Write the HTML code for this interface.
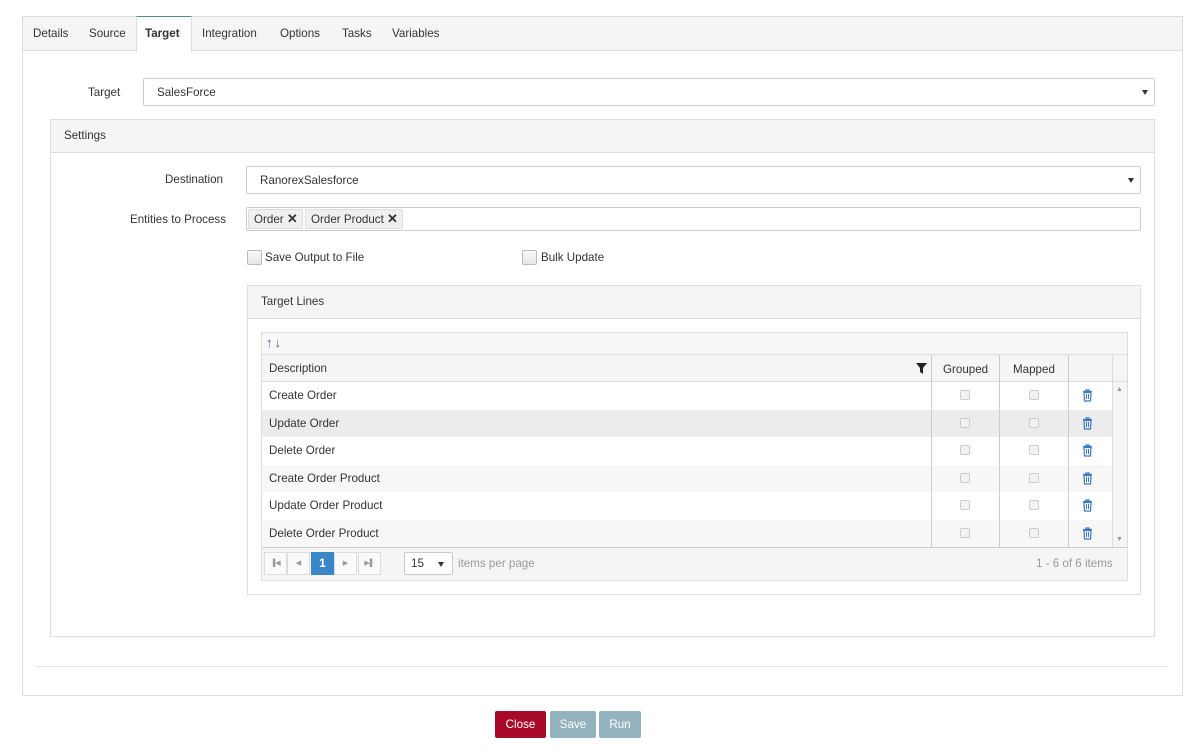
<!DOCTYPE html>
<html><head><meta charset="utf-8"><style>
*{box-sizing:border-box;margin:0;padding:0}
body{width:1200px;height:754px;background:#fff;font-family:"Liberation Sans",sans-serif;font-size:11.6px;color:#333;position:relative;overflow:hidden}
.a{position:absolute}
.box{position:absolute;border:1px solid #ddd}
.t{position:absolute;white-space:nowrap;line-height:14px}
.sel{position:absolute;border:1px solid #ccc;background:#fff;border-radius:2px}
.caret{position:absolute;right:6px;top:50%;margin-top:-2px;border-left:3px solid transparent;border-right:3px solid transparent;border-top:5px solid #333}
.cb{position:absolute;width:15px;height:15px;border:1px solid #bbb;border-radius:2px;background:linear-gradient(#fafafa,#e6e6e6)}
.scb{position:absolute;width:10px;height:10px;border:1px solid #ccc;border-radius:2px;background:#f2f2f2}
.row{position:absolute;left:262px;width:850px;height:27.5px}
.tag{position:absolute;top:209px;height:20px;border:1px solid #ddd;background:#f0f0f0;border-radius:2px;line-height:18px;padding-left:5px}
.btn{position:absolute;top:711px;height:27px;color:#fff;text-align:center;line-height:27px;border-radius:2px}
.pg{position:absolute;top:552px;height:23px;width:23px;border:1px solid #ddd;background:#fafafa;font-size:7px;color:#999;text-align:center;line-height:21px}
</style></head><body>
<div class="box" style="left:22px;top:16px;width:1161px;height:680px"></div>
<div class="a" style="left:23px;top:17px;width:1159px;height:34px;background:#f5f5f5;border-bottom:1px solid #ddd"></div>
<div class="a" style="left:136px;top:16px;width:56px;height:36px;background:#fff;border:1px solid #ddd;border-top:1px solid #4a8a9a;border-bottom:none"></div>
<div class="t" style="left:33px;top:27px">Details</div>
<div class="t" style="left:89px;top:27px">Source</div>
<div class="t" style="left:145px;top:27px;font-weight:bold">Target</div>
<div class="t" style="left:202px;top:27px">Integration</div>
<div class="t" style="left:280px;top:27px">Options</div>
<div class="t" style="left:342px;top:27px">Tasks</div>
<div class="t" style="left:392px;top:27px">Variables</div>

<div class="t" style="left:88px;top:86px">Target</div>
<div class="sel" style="left:143px;top:78px;width:1012px;height:28px"><div class="t" style="left:13px;top:7px">SalesForce</div><div class="caret"></div></div>

<div class="box" style="left:50px;top:119px;width:1105px;height:518px"></div>
<div class="a" style="left:51px;top:120px;width:1103px;height:33px;background:#f5f5f5;border-bottom:1px solid #ddd"></div>
<div class="t" style="left:64px;top:129px">Settings</div>

<div class="t" style="left:165px;top:173px">Destination</div>
<div class="sel" style="left:246px;top:166px;width:895px;height:28px"><div class="t" style="left:13px;top:7px">RanorexSalesforce</div><div class="caret"></div></div>

<div class="t" style="left:130px;top:213px">Entities to Process</div>
<div class="sel" style="left:246px;top:207px;width:895px;height:24px"></div>
<div class="tag" style="left:248px;width:55px">Order <b style="font-size:13px">✕</b></div>
<div class="tag" style="left:305px;width:98px">Order Product <b style="font-size:13px">✕</b></div>

<div class="cb" style="left:247px;top:250px"></div><div class="t" style="left:265px;top:251px">Save Output to File</div>
<div class="cb" style="left:522px;top:250px"></div><div class="t" style="left:541px;top:251px">Bulk Update</div>

<div class="box" style="left:247px;top:285px;width:894px;height:310px"></div>
<div class="a" style="left:248px;top:286px;width:892px;height:33px;background:#f5f5f5;border-bottom:1px solid #ddd"></div>
<div class="t" style="left:261px;top:295px">Target Lines</div>

<div class="box" style="left:261px;top:332px;width:867px;height:249px;background:#fff"></div>
<div class="a" style="left:262px;top:333px;width:865px;height:22px;background:#f7f7f7;border-bottom:1px solid #ddd"></div>
<div class="t" style="left:266px;top:336px;color:#2a6ebb;font-weight:bold;font-size:13px;letter-spacing:2px">↑↓</div>
<div class="a" style="left:262px;top:355px;width:865px;height:27px;background:#f5f5f5;border-bottom:1px solid #ddd"></div>
<div class="t" style="left:269px;top:362px">Description</div>
<svg class="a" style="left:916px;top:363px" width="11" height="11"><path d="M0 0H11L7 5V11L4 9V5Z" fill="#222"/></svg>
<div class="t" style="left:943px;top:363px">Grouped</div>
<div class="t" style="left:1013px;top:363px">Mapped</div>

<div class="row" style="top:382px;background:#fff"></div>
<div class="row" style="top:410px;background:#ececec"></div>
<div class="row" style="top:437px;background:#fff"></div>
<div class="row" style="top:465px;background:#f7f7f7"></div>
<div class="row" style="top:492px;background:#fff"></div>
<div class="row" style="top:520px;background:#f7f7f7"></div>
<div class="t" style="left:269px;top:389px">Create Order</div>
<div class="t" style="left:269px;top:417px">Update Order</div>
<div class="t" style="left:269px;top:444px">Delete Order</div>
<div class="t" style="left:269px;top:472px">Create Order Product</div>
<div class="t" style="left:269px;top:499px">Update Order Product</div>
<div class="t" style="left:269px;top:527px">Delete Order Product</div>

<div class="a" style="left:931px;top:355px;width:1px;height:192px;background:#ccc"></div>
<div class="a" style="left:999px;top:355px;width:1px;height:192px;background:#ccc"></div>
<div class="a" style="left:1068px;top:355px;width:1px;height:192px;background:#ccc"></div>
<div class="a" style="left:1112px;top:355px;width:1px;height:192px;background:#ddd"></div>
<div class="a" style="left:1113px;top:382px;width:14px;height:165px;background:#f5f5f5"></div>
<div class="t" style="left:1116px;top:383px;font-size:7px;color:#999">▲</div>
<div class="t" style="left:1116px;top:533px;font-size:7px;color:#999">▼</div>

<div id="cells"></div>
<script>
var ys=[390,418,445,473,500,528],h='';
ys.forEach(function(y){
h+='<div class="scb" style="left:960px;top:'+y+'px"></div><div class="scb" style="left:1029px;top:'+y+'px"></div>';
h+='<svg class="a" style="left:1082px;top:'+(y-1)+'px" width="11" height="13"><path d="M1 2.5H10M4 2.5V1H7V2.5M2 3.5H9L8.5 12H2.5Z" fill="none" stroke="#3b78c0" stroke-width="1.2"/><path d="M4.5 5V10M6.5 5V10" stroke="#3b78c0" stroke-width="1"/></svg>';
});
document.getElementById('cells').innerHTML=h;
</script>

<div class="a" style="left:262px;top:547px;width:865px;height:33px;background:#f5f5f5;border-top:1px solid #ccc"></div>
<div class="pg" style="left:264px">▐◀</div>
<div class="pg" style="left:287px">◀</div>
<div class="pg" style="left:311px;background:#3a87c8;border-color:#3a87c8;color:#fff;font-size:12px;font-weight:bold">1</div>
<div class="pg" style="left:334px">▶</div>
<div class="pg" style="left:358px">▶▌</div>
<div class="sel" style="left:404px;top:552px;width:49px;height:23px"><div class="t" style="left:6px;top:4px">15</div><div class="caret" style="right:8px"></div></div>
<div class="t" style="left:458px;top:557px;color:#999">items per page</div>
<div class="t" style="left:1036px;top:557px;color:#999">1 - 6 of 6 items</div>

<div class="a" style="left:36px;top:666px;width:1132px;height:1px;background:#e5e5e5"></div>

<div class="btn" style="left:495px;width:51px;background:#a80a2a">Close</div>
<div class="btn" style="left:550px;width:46px;background:#94b3bf">Save</div>
<div class="btn" style="left:599px;width:42px;background:#94b3bf">Run</div>
</body></html>
